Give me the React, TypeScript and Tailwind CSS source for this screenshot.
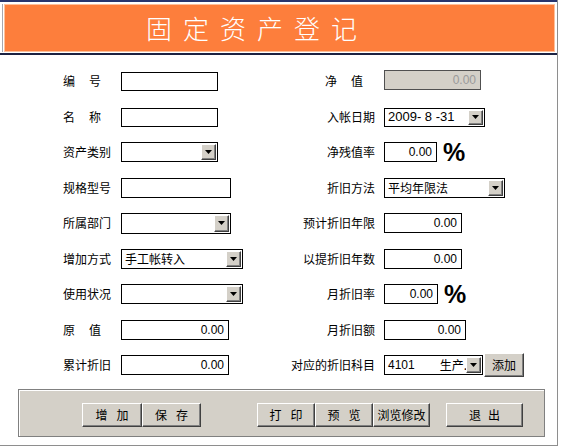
import React from "react";

const CJK = { fontFamily: '"Noto Sans CJK SC", "Noto Sans", sans-serif' };
const NUM = { fontFamily: '"Liberation Sans", Arial, "Noto Sans CJK SC", sans-serif' };

function Arrow() {
  return (
    <svg width="7" height="4" viewBox="0 0 7 4">
      <polygon points="0,0 7,0 3.5,4" fill="#000" />
    </svg>
  );
}

function DropBtn() {
  return (
    <div className="my-[1px] mr-[1px] w-[15px] shrink-0 bg-[#d4d0c8] border border-t-white border-l-white border-r-[#404040] border-b-[#404040] shadow-[inset_-1px_-1px_0_#808080] flex items-center justify-center">
      <Arrow />
    </div>
  );
}

function TextBox({ w, value, h = "h-[20px]" }: { w: string; value?: string; h?: string }) {
  return (
    <div
      className={`${w} ${h} border border-black bg-white flex items-center justify-end pr-[4px] text-[12px] text-black`}
      style={NUM}
    >
      {value}
    </div>
  );
}

function Select({ w, value, h = "h-[20px]", num }: { w: string; value?: React.ReactNode; h?: string; num?: boolean }) {
  return (
    <div className={`${w} ${h} border border-black bg-white flex items-stretch`}>
      <div
        className={`flex-1 flex items-center pl-[3px] overflow-hidden whitespace-nowrap ${num ? "text-[13px]" : "text-[12px]"} text-black`}
        style={num ? NUM : CJK}
      >
        {value}
      </div>
      <DropBtn />
    </div>
  );
}

function Pct() {
  return (
    <span className="ml-[6px] text-[25px] font-bold leading-none text-black" style={NUM}>
      %
    </span>
  );
}

function Spaced({ a, b }: { a: string; b: string }) {
  return (
    <span className="w-[38px] flex justify-between">
      <span>{a}</span>
      <span>{b}</span>
    </span>
  );
}

function Btn({ w, children }: { w: string; children: React.ReactNode }) {
  return (
    <div
      className={`${w} h-[24px] bg-[#d4d0c8] border border-t-white border-l-white border-r-[#404040] border-b-[#404040] shadow-[inset_-1px_-1px_0_#808080] flex items-center justify-center text-[12px] text-black`}
      style={CJK}
    >
      {children}
    </div>
  );
}

type Row = {
  mt: string;
  l: React.ReactNode;
  lf: React.ReactNode;
  r: React.ReactNode;
  rf: React.ReactNode;
};

const rows: Row[] = [
  {
    mt: "mt-[16px]",
    l: <Spaced a="编" b="号" />,
    lf: <TextBox w="w-[97px]" h="h-[19px]" />,
    r: <span className="mr-[12px] w-[38px] flex justify-between"><span>净</span><span>值</span></span>,
    rf: (
      <div className="-mt-[3px] w-[97px] h-[20px] border border-[#505050] bg-[#d4d0c8] flex items-center justify-end pr-[4px] text-[12px] text-[#9a9a9a]" style={NUM}>
        0.00
      </div>
    ),
  },
  {
    mt: "mt-[16px]",
    l: <Spaced a="名" b="称" />,
    lf: <TextBox w="w-[97px]" h="h-[19px]" />,
    r: "入帐日期",
    rf: <Select w="w-[101px]" h="h-[19px]" num value="2009- 8 -31" />,
  },
  {
    mt: "mt-[15px]",
    l: "资产类别",
    lf: <Select w="w-[97px]" />,
    r: "净残值率",
    rf: (
      <div className="flex items-center">
        <TextBox w="w-[53px]" value="0.00" />
        <Pct />
      </div>
    ),
  },
  {
    mt: "mt-[16px]",
    l: "规格型号",
    lf: <TextBox w="w-[110px]" />,
    r: "折旧方法",
    rf: <Select w="w-[121px]" value="平均年限法" />,
  },
  {
    mt: "mt-[15px]",
    l: "所属部门",
    lf: <Select w="w-[110px]" h="h-[21px]" />,
    r: "预计折旧年限",
    rf: <TextBox w="w-[78px]" value="0.00" />,
  },
  {
    mt: "mt-[16px]",
    l: "增加方式",
    lf: <Select w="w-[122px]" value="手工帐转入" />,
    r: "以提折旧年数",
    rf: <TextBox w="w-[78px]" value="0.00" />,
  },
  {
    mt: "mt-[15px]",
    l: "使用状况",
    lf: <Select w="w-[122px]" />,
    r: "月折旧率",
    rf: (
      <div className="flex items-center">
        <TextBox w="w-[54px]" value="0.00" />
        <Pct />
      </div>
    ),
  },
  {
    mt: "mt-[16px]",
    l: <Spaced a="原" b="值" />,
    lf: <TextBox w="w-[108px]" value="0.00" />,
    r: "月折旧额",
    rf: <TextBox w="w-[82px]" value="0.00" />,
  },
  {
    mt: "mt-[15px]",
    l: "累计折旧",
    lf: <TextBox w="w-[108px]" value="0.00" />,
    r: "对应的折旧科目",
    rf: (
      <div className="flex items-center gap-[1px]">
        <Select
          w="w-[99px]"
          value={
            <span className="flex" style={NUM}>
              <span className="text-[12px]">4101</span>
              <span className="ml-[25px] text-[12px]" style={CJK}>生产.</span>
            </span>
          }
        />
        <Btn w="w-[40px] h-[20px]">添加</Btn>
      </div>
    ),
  },
];

export default function App() {
  return (
    <div className="w-[562px] h-[448px] bg-white overflow-hidden" style={CJK}>
      <div className="w-[558px] h-[446px] border-r border-b border-[#8e8e8e] flex flex-col">
        {/* header */}
        <div className="h-[2px] bg-[#28356e]" />
        <div className="h-[51px] flex pt-[2px] pb-[1px]">
          <div className="w-[2px]" />
          <div className="w-[1px] bg-[#a8a8b0]" />
          <div className="w-[1px]" />
          <div className="w-[551px] h-[48px] bg-[#fd7e3c] border border-[#ffc09a] flex items-center pl-[141px]">
            <span className="text-[26px] font-light tracking-[11px] text-white leading-none">固定资产登记</span>
          </div>
        </div>
        <div className="h-[2px] bg-[#1c2242]" />

        {/* form */}
        <div className="flex flex-col text-[12px] text-black">
          {rows.map((r, i) => (
            <div key={i} className={`${r.mt} h-[20px] flex items-center`}>
              <div className="w-[63px]" />
              <div className="w-[58px] flex items-center whitespace-nowrap">{r.l}</div>
              <div className="w-[170px] flex items-center">{r.lf}</div>
              <div className="w-[84px] flex items-center justify-end whitespace-nowrap">{r.r}</div>
              <div className="w-[9px]" />
              <div className="flex items-center">{r.rf}</div>
            </div>
          ))}
        </div>

        {/* button panel */}
        <div className="mt-[14px] ml-[18px] w-[527px] h-[48px] bg-[#d4d0c8] border border-[#808080] shadow-[inset_1px_1px_0_#fff] flex items-start pt-[13px] pl-[63px]">
          <div className="flex">
            <Btn w="w-[60px]"><span className="flex gap-[9px]"><span>增</span><span>加</span></span></Btn>
            <Btn w="w-[59px]"><span className="flex gap-[9px]"><span>保</span><span>存</span></span></Btn>
          </div>
          <div className="flex ml-[56px]">
            <Btn w="w-[58px]"><span className="flex gap-[9px]"><span>打</span><span>印</span></span></Btn>
            <Btn w="w-[58px]"><span className="flex gap-[9px]"><span>预</span><span>览</span></span></Btn>
            <Btn w="w-[57px]">浏览修改</Btn>
          </div>
          <div className="flex ml-[16px]">
            <Btn w="w-[77px]"><span className="flex gap-[7px]"><span>退</span><span>出</span></span></Btn>
          </div>
        </div>
      </div>
    </div>
  );
}
